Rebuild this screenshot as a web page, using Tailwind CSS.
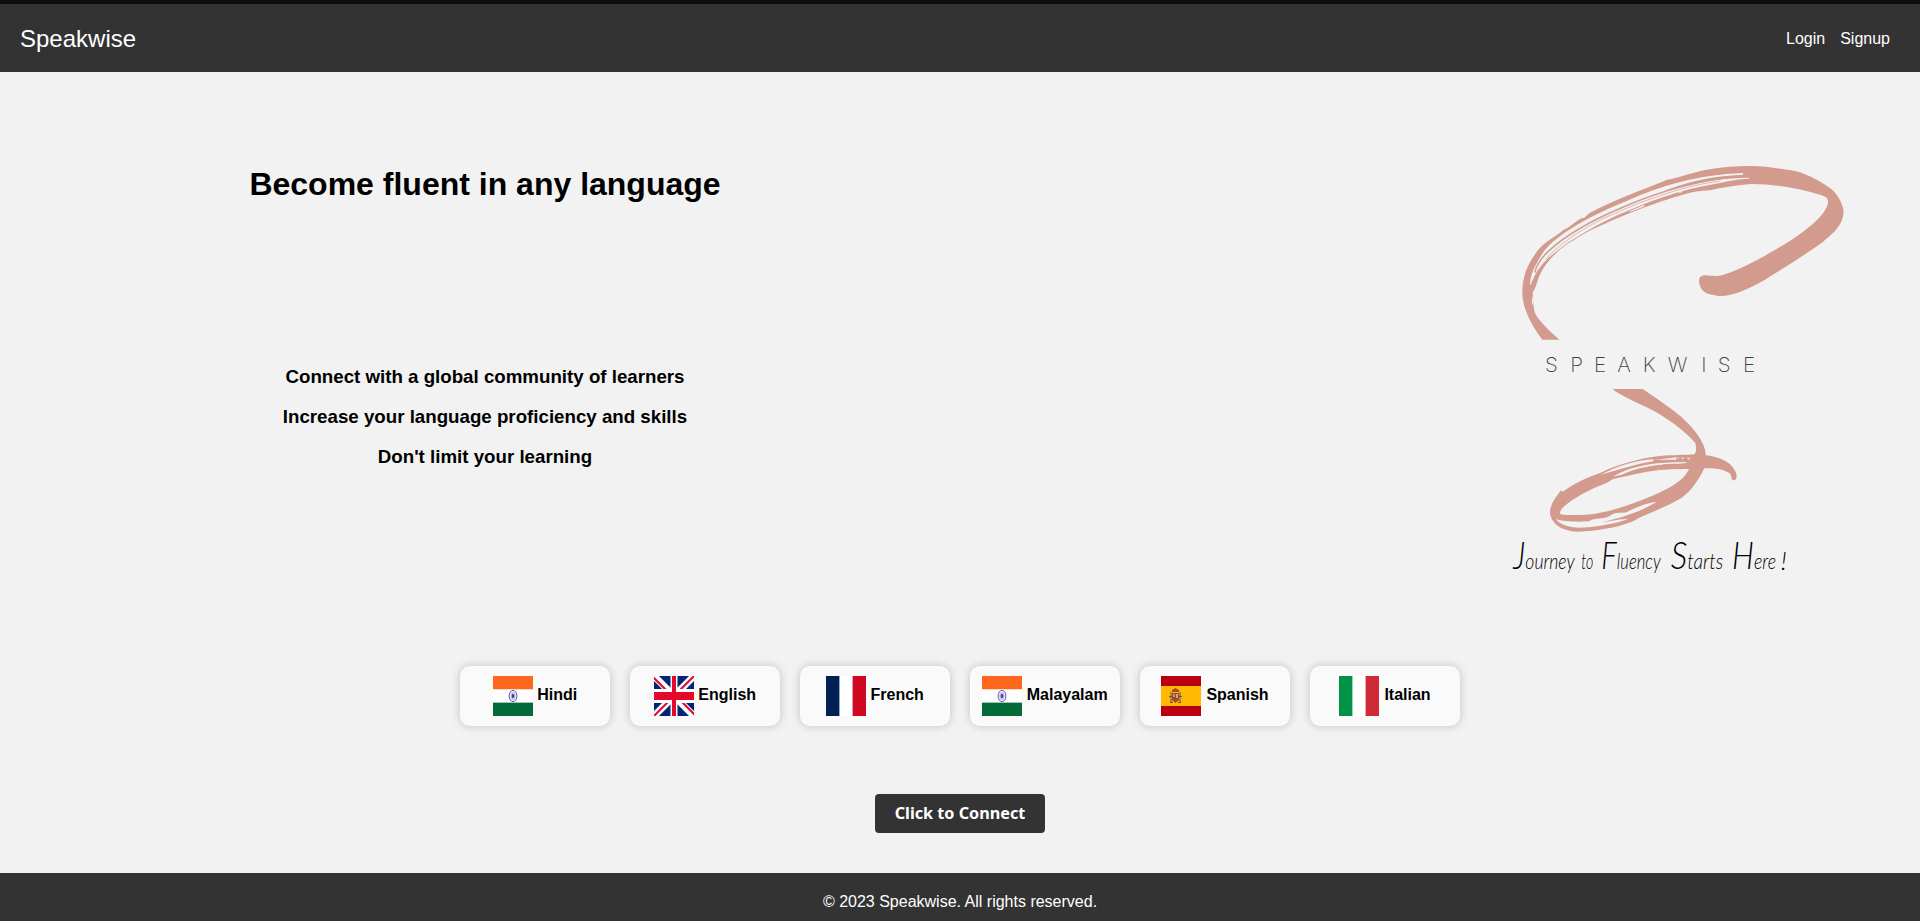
<!DOCTYPE html>
<html lang="en">
<head>
<meta charset="utf-8">
<title>Speakwise</title>
<script src="https://cdn.jsdelivr.net/npm/@tailwindcss/browser@4"></script>
</head>
<body class="flex h-[921px] flex-col overflow-hidden bg-[#f2f2f2] font-['Liberation_Sans',Arial,sans-serif] text-base text-black">
<svg width="0" height="0" class="hidden">
  <symbol id="india" viewBox="0 0 40 40">
    <path fill="#fff" d="M0 0h40v40H0z"/><path fill="#ff671f" d="M0 0h40v13H0z"/><path fill="#ffb48f" d="M0 13h40v.6H0z"/><path fill="#046a38" d="M0 27h40v13H0z"/><path fill="#82b59c" d="M0 26.3h40v.7H0z"/>
    <ellipse cx="20" cy="20" rx="3.9" ry="5.7" fill="#eeeef9" stroke="#5c5bb5" stroke-width="1"/>
    <ellipse cx="20" cy="20" rx="2.4" ry="3.8" fill="#b9b8e0"/><ellipse cx="20" cy="20" rx="1.2" ry="2" fill="#3a3799"/>
  </symbol>
</svg>
<header class="flex h-[72px] shrink-0 items-center justify-between border-t-4 border-[#0e0e0e] bg-[#333] pr-[30px] pl-5 text-white">
  <div class="pt-0.5 text-2xl">Speakwise</div>
  <nav class="flex gap-[15px] pt-0.5"><a>Login</a><a>Signup</a></nav>
</header>
<main class="flex h-[801px] shrink-0 flex-col items-center">
  <section class="flex h-[594px] w-full justify-between">
    <div class="flex w-[970px] flex-col items-center pt-[94px] font-bold">
      <h1 class="text-[32px] leading-[37px]">Become fluent in any language</h1>
      <div class="mt-[154px] text-center text-[18.72px] leading-10">
        <p>Connect with a global community of learners</p>
        <p>Increase your language proficiency and skills</p>
        <p>Don't limit your learning</p>
      </div>
    </div>
    <svg class="mt-[78px] mr-[60px] h-[450px] w-[360px] overflow-visible" viewBox="0 0 1080 1350">
      <path fill="#d39b8d" d="M127 569C90 520 67 470 67 430C66 370 90 335 110 305C133 275 165 262 190 240C210 233 228 212 245 205C256 204 262 193 270 188C340 152 420 122 500 90C545 80 580 66 620 59C665 51 710 48 755 48C800 48 850 58 885 63C930 74 975 102 1000 122C1016 137 1031 170 1031 187C1028 230 992 256 970 275C910 318 850 355 790 392C740 420 700 437 662 438C650 439 648 434 635 434C612 431 598 415 597 393C597 380 605 376 617 376C635 377 645 379 660 377C720 362 790 320 850 285C900 255 984 195 984 155C984 142 975 139 960 134C890 112 820 103 755 102C720 104 690 110 657 115C635 123 600 122 580 126C480 150 360 200 285 235C250 249 230 267 205 280C160 312 125 350 112 395C105 418 100 422 98 428C100 450 100 480 108 495C130 528 155 548 178 569Z"/>
      <g fill="#f2f2f2">
        <path d="M729 69C590 74 480 108 380 153C285 190 170 252 132 304C100 350 88 385 91 407C100 386 106 371 116 357C135 328 165 308 205 277C260 242 305 217 355 194C445 155 540 119 632 104C670 97 705 87 748 86L746 83C680 84 620 92 560 107L490 123C560 97 635 77 729 74Z"/>
        <path d="M388 184L432 165L434 169L392 185ZM537 126l8-4 1 4-7 3ZM211 280l6-5 3 2-5 5Z"/>
        <path d="M100 438C95 445 94 460 99 466Z"/>
      </g>
      <g fill="none" stroke="#d39b8d" stroke-linecap="round">
        <path stroke-width="4.500" d="M715 78C590 92 480 123 370 171C270 213 190 262 145 304C120 328 108 350 105 366"/>
        <path stroke-width="2" d="M660 93C560 105 440 147 340 192C250 231 180 281 138 327"/>
      </g>
      <g font-family="Inter, Lato, sans-serif" font-weight="200" font-size="62" fill="#3c4046">
        <text y="666" x="135 211 282 352 428 503 604 653 729">SPEAKWISE</text>
      </g>
      <g transform="translate(0 570)">
        <path fill="#d39b8d" fill-rule="evenodd" d="M337 147H428C480 183 540 220 575 262C605 298 617 322 617 346C650 349 690 363 702 388C713 401 712 420 702 421C691 421 697 407 688 399C665 385 640 384 613 385C595 422 572 455 545 473C500 500 453 517 415 535C380 560 280 575 235 575C180 575 150 545 150 517C150 495 168 468 185 450L187 456C225 428 265 411 302 398C350 375 420 354 480 348C515 345 560 345 583 343C591 335 588 318 586 309C555 275 500 230 440 202C400 183 363 167 337 147ZM180 520C178 502 230 470 270 450C300 436 325 429 338 418C410 400 470 385 567 387C550 425 500 450 450 470C380 500 300 525 240 525C200 525 182 526 180 520Z"/>
        <g fill="#f2f2f2">
          <path d="M302 404C350 380 410 359 461 358L459 364C415 370 375 385 302 404Z"/>
          <path d="M338 410C395 375 470 366 560 366L558 369C520 373 500 370 485 374C440 378 405 386 365 404Z"/>
          <path d="M338 427L368 411L360 422ZM463 360L520 353 530 352 528 359 490 359ZM470 389l10-4-6 4ZM532 354l5-3-2 7ZM545 354l7-3-4 8ZM562 351l4 4 3-3-1 7-5-2Z"/>
          <path d="M168 537C190 545 230 546 267 544C285 530 310 540 330 527C350 512 365 522 382 515C410 502 440 488 470 486C430 510 380 530 304 547C330 545 355 536 383 537C350 552 270 563 240 563C205 563 178 553 168 537Z"/>
        </g>
        <g font-family="Lato, 'Liberation Sans', cursive" font-style="italic" font-weight="300" font-size="64" fill="#000">
          <text x="40" y="688" textLength="184" lengthAdjust="spacingAndGlyphs"><tspan font-size="112">J</tspan>ourney</text>
          <text x="244" y="688" textLength="36" lengthAdjust="spacingAndGlyphs">to</text>
          <text x="304" y="688" textLength="178" lengthAdjust="spacingAndGlyphs"><tspan font-size="112">F</tspan>luency</text>
          <text x="512" y="688" textLength="158" lengthAdjust="spacingAndGlyphs"><tspan font-size="112">S</tspan>tarts</text>
          <text x="696" y="688" textLength="132" lengthAdjust="spacingAndGlyphs"><tspan font-size="112">H</tspan>ere</text>
          <text x="842" y="690" font-size="76" textLength="18" lengthAdjust="spacingAndGlyphs">!</text>
        </g>
      </g>
    </svg>
  </section>
  <section class="flex gap-5 font-bold">
    <div class="flex h-[60px] w-[150px] items-center justify-center gap-[4.45px] rounded-[10px] bg-[#fafafa] shadow-[0_0_10px_rgba(0,0,0,0.2)]"><svg class="size-10"><use href="#india"/></svg><span class="pb-0.5">Hindi</span></div>
    <div class="flex h-[60px] w-[150px] items-center justify-center gap-[4.45px] rounded-[10px] bg-[#fafafa] shadow-[0_0_10px_rgba(0,0,0,0.2)]">
      <svg class="size-10" viewBox="0 0 40 40"><path fill="#012479" d="M0 0h40v40H0z"/><path stroke="#fff" stroke-width="7" d="M-1-1L41 41M41-1L-1 41"/><path stroke="#e4082a" stroke-width="2" d="M-1 1L18 20M23 17L41-1M-1 41L18 22M22 20L41 39"/><path fill="#fff" d="M16.500 0h7v40h-7zM0 13h40v14H0z"/><path fill="#e4082a" d="M18 0h4v40h-4zM0 16h40v8H0z"/></svg><span class="pb-0.5">English</span></div>
    <div class="flex h-[60px] w-[150px] items-center justify-center gap-[4.45px] rounded-[10px] bg-[#fafafa] shadow-[0_0_10px_rgba(0,0,0,0.2)]"><svg class="size-10" viewBox="0 0 40 40"><path fill="#fff" d="M0 0h40v40H0z"/><path fill="#002153" d="M0 0h13.400v40H0z"/><path fill="#ce0821" d="M26.600 0H40v40H26.600z"/></svg><span class="pb-0.5">French</span></div>
    <div class="flex h-[60px] w-[150px] items-center justify-center gap-[4.45px] rounded-[10px] bg-[#fafafa] shadow-[0_0_10px_rgba(0,0,0,0.2)]"><svg class="size-10"><use href="#india"/></svg><span class="pb-0.5">Malayalam</span></div>
    <div class="flex h-[60px] w-[150px] items-center justify-center gap-[5px] rounded-[10px] bg-[#fafafa] shadow-[0_0_10px_rgba(0,0,0,0.2)]">
      <svg class="size-10" viewBox="0 0 40 40"><path fill="#b90013" d="M0 0h40v40H0z"/><path fill="#ffb900" d="M0 10h40v20H0z"/><path fill="#a38155" d="M9 16h2v11H9zM18 16h2v11h-2z"/><path fill="#a94b1d" d="M11 14l3.500-2 3.500 2v2h-7zM11 17h7v7l-3.500 3L11 24z"/><path fill="#c9905d" d="M12 18h2v3h-2z"/><path fill="#bda3b4" d="M15 18h2v4h-2z"/><path fill="#8c4a2c" d="M8 20h4v1H8zM17 20h4v1h-4zM9 26h3v1H9zM17 26h3v1h-3z"/></svg><span class="pb-0.5">Spanish</span></div>
    <div class="flex h-[60px] w-[150px] items-center justify-center gap-[5px] rounded-[10px] bg-[#fafafa] shadow-[0_0_10px_rgba(0,0,0,0.2)]"><svg class="size-10" viewBox="0 0 40 40"><path fill="#fff" d="M0 0h40v40H0z"/><path fill="#009246" d="M0 0h13.400v40H0z"/><path fill="#ce2b37" d="M26.600 0H40v40H26.600z"/></svg><span class="pb-0.5">Italian</span></div>
  </section>
  <button class="mt-[68px] h-[39px] w-[170px] rounded bg-[#333] font-['Noto_Sans',sans-serif] text-[16.2px] font-bold whitespace-nowrap text-white">Click to Connect</button>
</main>
<footer class="flex h-12 shrink-0 items-center justify-center bg-[#333] pt-[9px] text-white">© 2023 Speakwise. All rights reserved.</footer>
</body>
</html>
